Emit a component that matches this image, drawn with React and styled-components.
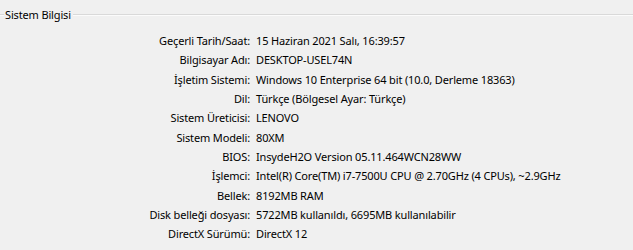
import React from 'react';
import styled, { createGlobalStyle } from 'styled-components';

const Global = createGlobalStyle`
    html, body {
        margin: 0;
        background: #f0f0f0;
    }
    body {
        font-family: "Noto Sans", "Liberation Sans", sans-serif;
        font-size: 11px;
        letter-spacing: -0.15px;
        color: #000;
    }
`

const Panel = styled.div`
    width: 633px;
    height: 250px;
    overflow: hidden;
    background: #f0f0f0;
`

const Legend = styled.div`
    display: flex;
    align-items: center;
    height: 28px;
    padding-top: 1px;
    box-sizing: border-box;
`

const Rule = styled.div`
    flex: ${p => (p.$grow ? 1 : 'none')};
    width: ${p => (p.$grow ? 'auto' : '4px')};
    height: 1px;
    background: #d9d9d9;
    box-shadow: 0 1px 0 #fbfbfb;
`

const Title = styled.span`
    padding: 0 2px 0 1px;
    line-height: 16px;
`

const InfoGrid = styled.div`
    display: grid;
    grid-template-columns: 250px 1fr;
    column-gap: 6px;
    grid-auto-rows: 19.3px;
    align-items: center;
    padding-top: 3px;
`

const Label = styled.span`
    text-align: right;
    white-space: nowrap;
`

const Value = styled.span`
    white-space: nowrap;
`

const rows = [
    ['Geçerli Tarih/Saat:', '15 Haziran 2021 Salı, 16:39:57'],
    ['Bilgisayar Adı:', 'DESKTOP-USEL74N'],
    ['İşletim Sistemi:', 'Windows 10 Enterprise 64 bit (10.0, Derleme 18363)'],
    ['Dil:', 'Türkçe (Bölgesel Ayar: Türkçe)'],
    ['Sistem Üreticisi:', 'LENOVO'],
    ['Sistem Modeli:', '80XM'],
    ['BIOS:', 'InsydeH2O Version 05.11.464WCN28WW'],
    ['İşlemci:', 'Intel(R) Core(TM) i7-7500U CPU @ 2.70GHz (4 CPUs), ~2.9GHz'],
    ['Bellek:', '8192MB RAM'],
    ['Disk belleği dosyası:', '5722MB kullanıldı, 6695MB kullanılabilir'],
    ['DirectX Sürümü:', 'DirectX 12'],
];

export default function App() {
    return (
        <Panel>
            <Global />
            <Legend>
                <Rule />
                <Title>Sistem Bilgisi</Title>
                <Rule $grow />
            </Legend>
            <InfoGrid>
                {rows.map(([label, value]) => (
                    <React.Fragment key={label}>
                        <Label>{label}</Label>
                        <Value>{value}</Value>
                    </React.Fragment>
                ))}
            </InfoGrid>
        </Panel>
    );
}
